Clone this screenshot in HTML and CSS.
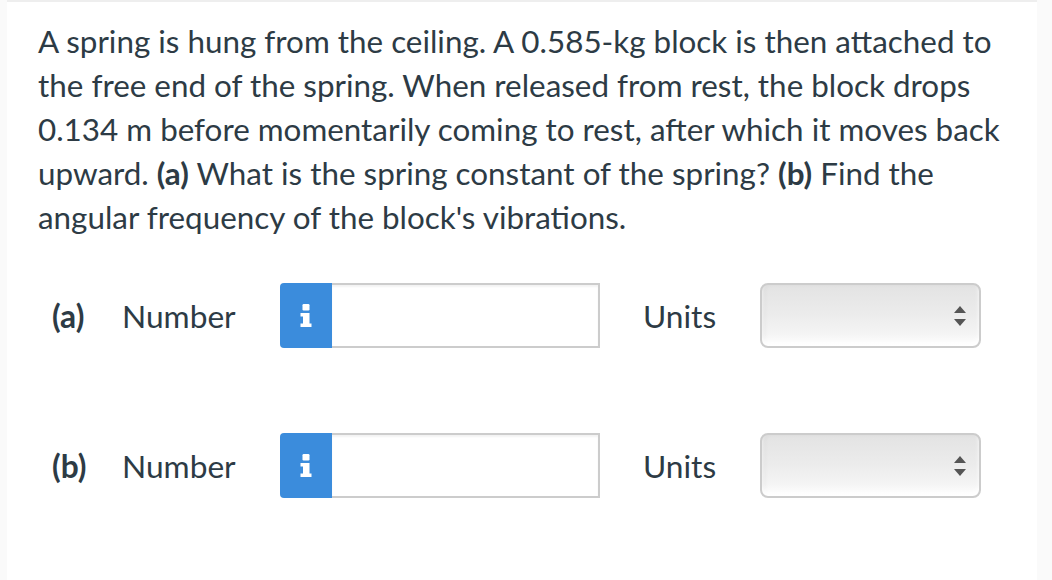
FILE: index.html
```html
<!DOCTYPE html>
<html>
<head>
<meta charset="utf-8">
<link rel="stylesheet" href="styles.css">
</head>
<body>
<div class="page">
  <div class="card">
    <p class="question">A spring is hung from the ceiling. A 0.585-kg block is then attached to the free end of the spring. When released from rest, the block drops 0.134 m before momentarily coming to rest, after which it moves back upward. <b>(a)</b> What is the spring constant of the spring? <b>(b)</b> Find the angular frequency of the block's vibrations.</p>

    <div class="row">
      <span class="part">(a)</span>
      <span class="lbl">Number</span>
      <span class="info"><svg width="12" height="23" viewBox="0 0 12 23"><rect x="2.5" y="0" width="7" height="6.5" rx="1.2" fill="#fff"/><path d="M0.5 9h9v10.5h2v3.5H0.5v-3.5h2.5v-7H0.5z" fill="#fff"/></svg></span>
      <span class="input"></span>
      <span class="units">Units</span>
      <span class="select"><svg class="arrows" width="12" height="20" viewBox="0 0 12 20"><path d="M6 0L12 7H0z" fill="#555"/><path d="M0 13h12L6 20z" fill="#555"/></svg></span>
    </div>

    <div class="row">
      <span class="part">(b)</span>
      <span class="lbl">Number</span>
      <span class="info"><svg width="12" height="23" viewBox="0 0 12 23"><rect x="2.5" y="0" width="7" height="6.5" rx="1.2" fill="#fff"/><path d="M0.5 9h9v10.5h2v3.5H0.5v-3.5h2.5v-7H0.5z" fill="#fff"/></svg></span>
      <span class="input"></span>
      <span class="units">Units</span>
      <span class="select"><svg class="arrows" width="12" height="20" viewBox="0 0 12 20"><path d="M6 0L12 7H0z" fill="#555"/><path d="M0 13h12L6 20z" fill="#555"/></svg></span>
    </div>
  </div>
</div>
</body>
</html>
```

FILE: styles.css
```css
html, body {
  margin: 0;
  padding: 0;
  background: #fafafa;
}
.page {
  width: 1052px;
  height: 580px;
  overflow: hidden;
  background: #fafafa;
  padding-left: 7px;
  box-sizing: border-box;
}
.card {
  width: 1030px;
  height: 580px;
  background: #fff;
  border-top: 2px solid #eeeeee;
  box-sizing: border-box;
  padding: 17px 0 0 31px;
  font-family: Lato, "Open Sans", sans-serif;
  color: #2d3b45;
}
.question {
  margin: 0;
  width: 988px;
  font-size: 31.4px;
  line-height: 44px;
}
.question b {
  font-weight: 700;
}
.row {
  display: flex;
  align-items: center;
  height: 65px;
  margin-left: 14px;
  margin-top: 44px;
  font-size: 31.7px;
}
.row + .row {
  margin-top: 85px;
}
.part {
  width: 70px;
  font-weight: 700;
}
.lbl {
  width: 158px;
}
.info {
  width: 52px;
  height: 65px;
  background: #3b8cdc;
  border-radius: 4px 0 0 4px;
  display: flex;
  align-items: center;
  justify-content: center;
}
.input {
  width: 268px;
  height: 65px;
  box-sizing: border-box;
  border: 2px solid #cccccc;
  border-left: 0;
  background: #fff;
  box-shadow: inset 0 2px 2px rgba(0,0,0,0.05);
}
.units {
  margin-left: 43px;
  width: 117px;
}
.select {
  width: 221px;
  height: 65px;
  box-sizing: border-box;
  border: 2px solid #cccccc;
  border-radius: 8px;
  background: linear-gradient(#e3e3e3, #ececec 50%, #f4f4f4 80%, #ffffff);
  box-shadow: inset 0 -4px 4px rgba(255,255,255,0.9), inset 3px 0 4px rgba(0,0,0,0.04);
  display: flex;
  align-items: center;
  justify-content: flex-end;
  padding-right: 13px;
}
```
